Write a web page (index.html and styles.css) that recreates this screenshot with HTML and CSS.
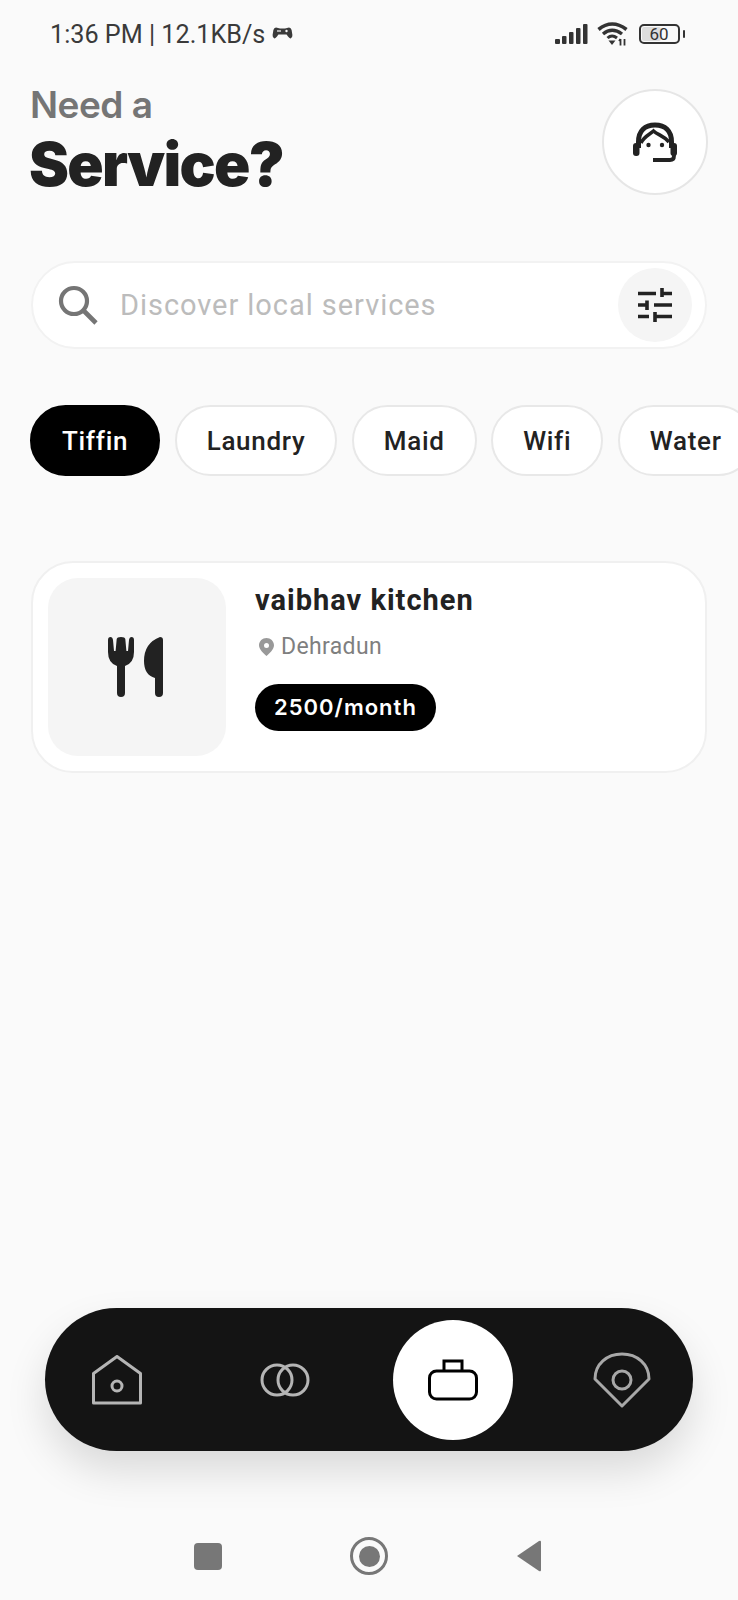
FILE: index.html
```html
<!DOCTYPE html>
<html lang="en">
<head>
    <meta charset="UTF-8">
    <meta name="viewport" content="width=device-width, initial-scale=1.0">
    <title>Need a Service?</title>
    <link rel="stylesheet" href="styles.css">
</head>
<body>
    <div class="app">
        <div class="status-bar">
            <div class="status-left">
                <span>1:36 PM | 12.1KB/s</span>
                <svg class="game-icon" width="21" height="14" viewBox="0 0 21 14">
                    <path d="M4 1.5 L8 2.5 H13 L17 1.5 Q19 1.5 19.6 4 L20.4 9 Q20.6 12 18.6 12.4 Q17.4 12.6 16 10.6 L14.6 8.6 H6.4 L5 10.6 Q3.6 12.6 2.4 12.4 Q.4 12 .6 9 L1.4 4 Q2 1.5 4 1.5 Z" fill="#3a3a3a"/>
                    <circle cx="14.5" cy="5" r="1.2" fill="#fafafa"/>
                    <rect x="5" y="4.4" width="4" height="1.2" fill="#fafafa"/>
                </svg>
            </div>
            <div class="status-right">
                <svg width="33" height="21" viewBox="0 0 33 21">
                    <rect x="0" y="15" width="5" height="5" rx="1" fill="#333"/>
                    <rect x="7" y="12" width="4.5" height="8" rx="1" fill="#333"/>
                    <rect x="14" y="8" width="4.5" height="12" rx="1" fill="#333"/>
                    <rect x="21" y="4" width="4.5" height="16" rx="1" fill="#333"/>
                    <rect x="28" y="0" width="4.5" height="20" rx="1" fill="#333"/>
                </svg>
                <svg width="32" height="24" viewBox="0 0 32 24">
                    <path d="M1.5 7.5 Q15 -3.5 29.5 7.5" fill="none" stroke="#333" stroke-width="3.6"/>
                    <path d="M6 12 Q15 4.5 25 12" fill="none" stroke="#333" stroke-width="3.4"/>
                    <path d="M10.5 16 Q15 12 20 16" fill="none" stroke="#333" stroke-width="3"/>
                    <path d="M11.5 18.5 H18.5 L15 23 Z" fill="#333"/>
                    <path d="M23.5 23.5 V17 M23.5 17 L22 19 M27.5 17 V23.5" fill="none" stroke="#333" stroke-width="1.8"/>
                </svg>
                <div class="battery-wrap">
                    <div class="battery">
                        <div class="battery-fill"></div>
                        <span>60</span>
                    </div>
                    <div class="battery-tip"></div>
                </div>
            </div>
        </div>

        <div class="header">
            <div class="titles">
                <div class="need">Need a</div>
                <h1>Service?</h1>
            </div>
            <div class="support-btn">
                <svg width="44" height="40" viewBox="0 0 44 40">
                    <path d="M5.5 26 V20 C5.5 9 12 3 22 3 C32 3 38.5 9 38.5 20 V26" fill="none" stroke="#222" stroke-width="5"/>
                    <path d="M8 21 C11 14 16 13 20.5 9 C25 13 31 14 36 20" fill="none" stroke="#222" stroke-width="3.6"/>
                    <rect x="0" y="21" width="6.5" height="13" rx="3" fill="#222"/>
                    <rect x="37.5" y="21" width="6.5" height="13" rx="3" fill="#222"/>
                    <circle cx="15.5" cy="23" r="2.2" fill="#222"/>
                    <circle cx="29" cy="23" r="2.2" fill="#222"/>
                    <path d="M41 31 V34 Q41 38 37 38 H20" fill="none" stroke="#222" stroke-width="3.8"/>
                </svg>
            </div>
        </div>

        <div class="search-bar">
            <svg class="search-icon" width="42" height="42" viewBox="0 0 42 42">
                <circle cx="17" cy="17" r="13" fill="none" stroke="#757575" stroke-width="4.2"/>
                <path d="M26.5 26.5 L39 39" fill="none" stroke="#757575" stroke-width="4.6"/>
            </svg>
            <div class="search-placeholder">Discover local services</div>
            <div class="filter-btn">
                <svg width="36" height="36" viewBox="0 0 36 36" fill="none" stroke="#222" stroke-width="3.6">
                    <path d="M1 6.5 H19 M25 6.5 H35 M25 1 V10"/>
                    <path d="M1 18 H10 M17 18 H35 M10 13.5 V23"/>
                    <path d="M1 29.5 H12 M18 29.5 H35 M18 25 V35"/>
                </svg>
            </div>
        </div>

        <div class="chips">
            <div class="chip active">Tiffin</div>
            <div class="chip">Laundry</div>
            <div class="chip">Maid</div>
            <div class="chip">Wifi</div>
            <div class="chip">Water</div>
        </div>

        <div class="card">
            <div class="thumb">
                <svg class="food-icon" width="55" height="60" viewBox="0 0 55 60" fill="#222">
                    <path d="M0 3 Q0 0 2.5 0 Q4.5 0 5 3 L6 14 H7.6 L8.7 2 Q9 0 13 0 Q17 0 17.3 2 L18.4 14 H20 L21 3 Q21.5 0 23.5 0 Q26 0 26 3 V15 Q26 26 17 29 V56 Q17 60 13 60 Q9 60 9 56 V29 Q0 26 0 15 Z"/>
                    <path d="M52 0 Q55 0 55 3 V56 Q55 60 51 60 Q47 60 47 56 V41 Q36 38 36 24 Q36 6 52 0 Z"/>
                </svg>
            </div>
            <div class="card-body">
                <div class="card-name">vaibhav kitchen</div>
                <div class="card-loc">
                    <svg width="15" height="18" viewBox="0 0 15 18">
                        <path fill-rule="evenodd" d="M7.5 0 C3.4 0 0 3.2 0 7.3 C0 11.5 4.5 15.6 7.5 18 C10.5 15.6 15 11.5 15 7.3 C15 3.2 11.6 0 7.5 0 Z M7.5 5 A2.5 2.5 0 1 1 7.5 10 A2.5 2.5 0 1 1 7.5 5 Z" fill="#999"/>
                    </svg>
                    <span>Dehradun</span>
                </div>
                <div class="price">2500/month</div>
            </div>
        </div>

        <div class="bottom-nav">
            <div class="nav-item nav-home">
                <svg width="50" height="50" viewBox="0 0 50 50" fill="none" stroke="#b5b5b5" stroke-width="3">
                    <path d="M1.5 18.5 L25 1.5 L48.5 18.5 V48 H1.5 Z" stroke-linejoin="round"/>
                    <circle cx="25" cy="31" r="5"/>
                </svg>
            </div>
            <div class="nav-item nav-rings">
                <svg width="50" height="34" viewBox="0 0 50 34" fill="none" stroke="#b5b5b5" stroke-width="3">
                    <circle cx="17" cy="17" r="15"/>
                    <circle cx="33" cy="17" r="15"/>
                </svg>
            </div>
            <div class="nav-item nav-active">
                <svg width="50" height="42" viewBox="0 0 50 42" fill="none" stroke="#000" stroke-width="3">
                    <rect x="1.5" y="12" width="47" height="28" rx="7"/>
                    <path d="M16 12 V2 H34 V12"/>
                </svg>
            </div>
            <div class="nav-item nav-pin">
                <svg width="58" height="56" viewBox="0 0 58 56" fill="none" stroke="#a8a8a8" stroke-width="3">
                    <path d="M2 27 C2 12 14 2 29 2 C44 2 56 12 56 27 L29 54 Z" stroke-linejoin="round"/>
                    <circle cx="29" cy="28" r="9"/>
                </svg>
            </div>
        </div>

        <div class="android-nav">
            <div class="nav-square"></div>
            <div class="nav-circle"><div class="nav-dot"></div></div>
            <svg width="26" height="32" viewBox="0 0 26 32">
                <path d="M25 2 V30 Q25 32 23 31 L1 16 L23 1 Q25 0 25 2 Z" fill="#777"/>
            </svg>
        </div>
    </div>
</body>
</html>
```

FILE: styles.css
```css
html, body {
    margin: 0;
    padding: 0;
}
body {
    background: #fafafa;
    font-family: Roboto, Arial, sans-serif;
    color: #222;
}
.app {
    width: 738px;
    height: 1600px;
    overflow: hidden;
    display: flex;
    flex-direction: column;
}
.status-bar {
    display: flex;
    justify-content: space-between;
    align-items: center;
    height: 28px;
    margin-top: 20px;
    padding: 0 53px 0 50px;
}
.status-left {
    display: flex;
    align-items: center;
    gap: 7px;
    font-size: 25.2px;
    color: #3a3a3a;
    white-space: nowrap;
}
.game-icon {
    margin-top: -3px;
}
.status-right {
    display: flex;
    align-items: center;
    gap: 9px;
}
.battery-wrap {
    display: flex;
    align-items: center;
    gap: 3px;
    margin-left: 1px;
}
.battery {
    position: relative;
    box-sizing: border-box;
    width: 41px;
    height: 20px;
    border: 2px solid #333;
    border-radius: 5px;
    font-size: 17px;
    line-height: 16px;
    text-align: center;
    color: #333;
}
.battery span {
    position: relative;
}
.battery-fill {
    position: absolute;
    left: 1px;
    top: 1px;
    bottom: 1px;
    width: 19px;
    background: #ddd;
    border-radius: 2px;
}
.battery-tip {
    width: 2.5px;
    height: 8px;
    background: #333;
    border-radius: 1px;
}
.header {
    display: flex;
    justify-content: space-between;
    align-items: flex-start;
    margin-top: 41px;
    padding: 0 30px;
}
.need {
    font-family: Inter, Arial, sans-serif;
    font-size: 37px;
    font-weight: 600;
    line-height: 36px;
    margin-top: -2px;
    color: #757575;
    letter-spacing: -0.5px;
}
h1 {
    margin: 8px 0 0 -1px;
    font-family: Inter, Arial, sans-serif;
    font-size: 60px;
    font-weight: 900;
    line-height: 66px;
    letter-spacing: -1.7px;
    color: #222;
}
.support-btn {
    width: 102px;
    height: 102px;
    border: 2px solid #e6e6e6;
    border-radius: 50%;
    background: #fff;
    display: flex;
    align-items: center;
    justify-content: center;
}
.search-bar {
    display: flex;
    align-items: center;
    height: 84px;
    margin: 64px 31px 0;
    padding-left: 24px;
    padding-right: 13px;
    background: #fff;
    border: 2px solid #f2f2f2;
    border-radius: 44px;
}
.search-icon {
    flex: none;
}
.search-placeholder {
    flex: 1;
    margin-left: 21px;
    font-size: 29px;
    letter-spacing: 0.95px;
    color: #bcbcbc;
}
.filter-btn {
    width: 74px;
    height: 74px;
    border-radius: 50%;
    background: #f5f5f5;
    display: flex;
    align-items: center;
    justify-content: center;
}
.chips {
    display: flex;
    gap: 14.5px;
    margin-top: 56px;
    padding-left: 30px;
}
.chip {
    flex: none;
    box-sizing: border-box;
    height: 71px;
    padding: 0 30px;
    display: flex;
    align-items: center;
    background: #fff;
    border: 2px solid #e8e8e8;
    border-radius: 36px;
    font-size: 26px;
    font-weight: 500;
    letter-spacing: 0.7px;
    color: #222;
}
.chip.active {
    background: #000;
    border-color: #000;
    color: #fff;
}
.card {
    display: flex;
    margin: 85px 31px 0;
    padding: 15px;
    gap: 29px;
    box-sizing: border-box;
    height: 212px;
    background: #fff;
    border: 2px solid #f0f0f0;
    border-radius: 42px;
}
.thumb {
    flex: none;
    width: 178px;
    height: 178px;
    background: #f5f5f5;
    border-radius: 30px;
    display: flex;
    align-items: center;
    justify-content: center;
}
.food-icon {
    margin-right: 4px;
}
.card-name {
    margin-top: 4px;
    font-size: 29px;
    font-weight: 700;
    letter-spacing: 1px;
    line-height: 36px;
    color: #222;
}
.card-loc {
    display: flex;
    align-items: center;
    gap: 7px;
    margin-top: 14px;
    padding-left: 4px;
    font-size: 23px;
    line-height: 30px;
    letter-spacing: 0.35px;
    color: #7f7f7f;
}
.price {
    display: inline-block;
    margin-top: 22px;
    height: 47px;
    line-height: 47px;
    padding: 0 19px;
    background: #000;
    border-radius: 24px;
    font-family: Inter, Arial, sans-serif;
    font-size: 22px;
    font-weight: 600;
    letter-spacing: 1px;
    color: #fff;
}
.bottom-nav {
    display: flex;
    align-items: center;
    height: 143px;
    margin: auto 45px 0;
    padding-left: 47px;
    background: #141414;
    border-radius: 72px;
    box-shadow: 0 20px 40px rgba(0,0,0,0.13);
}
.nav-item {
    display: flex;
    align-items: center;
    justify-content: center;
}
.nav-rings {
    margin-left: 118px;
}
.nav-active {
    width: 120px;
    height: 120px;
    margin-left: 83px;
    border-radius: 50%;
    background: #fff;
}
.nav-pin {
    margin-left: 80px;
}
.android-nav {
    display: flex;
    align-items: center;
    height: 66px;
    margin-top: 72px;
    margin-bottom: 11px;
    padding-left: 194px;
}
.nav-square {
    width: 28px;
    height: 27px;
    background: #777;
    border-radius: 4px;
}
.nav-circle {
    box-sizing: border-box;
    width: 38px;
    height: 38px;
    margin-left: 128px;
    margin-right: 128px;
    border: 3.5px solid #777;
    border-radius: 50%;
    display: flex;
    align-items: center;
    justify-content: center;
}
.nav-dot {
    width: 21px;
    height: 21px;
    background: #777;
    border-radius: 50%;
}
```
